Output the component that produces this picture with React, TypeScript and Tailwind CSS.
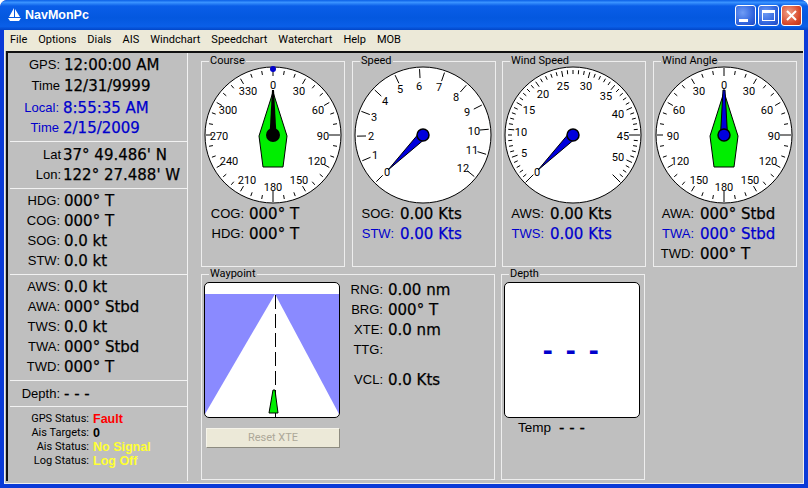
import React from "react";

const ROBOTO = "font-['Roboto',sans-serif]";
const LABEL = "font-['Liberation_Sans',Arial,sans-serif] text-[13px] leading-[20px]";
const VALUE = "font-['DejaVu_Sans',Verdana,sans-serif] text-[15px] leading-[20px] whitespace-nowrap [-webkit-text-stroke:0.25px]";

function Row({ label, value, w = 52, gap = 4, blue = false }: { label: string; value: string; w?: number; gap?: number; blue?: boolean }) {
  const color = blue ? "text-[#0000cc]" : "text-black";
  return (
    <div className={`flex h-[20px] items-center ${color}`}>
      <span className={`${LABEL} text-right whitespace-nowrap`} style={{ width: w, marginRight: gap }}>{label}</span>
      <span className={VALUE}>{value}</span>
    </div>
  );
}

function Section({ children, last = false }: { children: React.ReactNode; last?: boolean }) {
  return (
    <div className={last ? "pt-[5px]" : "pt-[2px] pb-[3px] ml-[2px] border-b border-[#f2f2f2]"}>
      <div className={last ? "" : "-ml-[2px]"}>{children}</div>
    </div>
  );
}

function StatusRow({ label, value, color }: { label: string; value: string; color: string }) {
  return (
    <div className="flex h-[14px] items-center gap-[4px]">
      <span className={`w-[81px] text-right text-[11px] text-black whitespace-nowrap ${ROBOTO}`}>{label}</span>
      <span className={`font-['Liberation_Sans',Arial,sans-serif] text-[12.5px] font-bold whitespace-nowrap ${color}`}>{value}</span>
    </div>
  );
}

function LeftPanel() {
  return (
    <div className="w-[180px] shrink-0 border-r border-[#f2f2f2] flex flex-col">
      <Section>
        <div className="flex flex-col">
          <div className="mb-px"><Row label="GPS:" value="12:00:00 AM" /></div>
          <div className="mb-[2px]"><Row label="Time" value="12/31/9999" /></div>
          <Row label="Local:" value="8:55:35 AM" w={51} blue />
          <Row label="Time" value="2/15/2009" w={51} blue />
        </div>
      </Section>
      <Section>
        <div className="pt-px">
          <Row label="Lat" value="37° 49.486' N" w={53} gap={2} />
          <Row label="Lon:" value="122° 27.488' W" w={53} gap={2} />
        </div>
      </Section>
      <Section>
        <Row label="HDG:" value="000° T" />
        <Row label="COG:" value="000° T" />
        <Row label="SOG:" value="0.0 kt" />
        <Row label="STW:" value="0.0 kt" />
      </Section>
      <Section>
        <Row label="AWS:" value="0.0 kt" />
        <Row label="AWA:" value="000° Stbd" />
        <Row label="TWS:" value="0.0 kt" />
        <Row label="TWA:" value="000° Stbd" />
        <Row label="TWD:" value="000° T" />
      </Section>
      <Section>
        <div className="pt-px -mb-px"><Row label="Depth:" value="- - -" /></div>
      </Section>
      <Section last>
        <StatusRow label="GPS Status:" value="Fault" color="text-[#ff0000]" />
        <StatusRow label="Ais Targets:" value="0" color="text-black" />
        <StatusRow label="Ais Status:" value="No Signal" color="text-[#ffff33]" />
        <StatusRow label="Log Status:" value="Log Off" color="text-[#ffff33]" />
      </Section>
    </div>
  );
}

function Frame({ title, className, children }: { title: string; className: string; children: React.ReactNode }) {
  return (
    <fieldset className={`border border-[#eeeeee] h-[211px] w-[144px] shrink-0 min-w-0 ${className}`}>
      <legend className={`ml-[7px] px-px h-[10px] leading-[10px] text-[11px] text-black whitespace-nowrap ${ROBOTO}`}>{title}</legend>
      {children}
    </fieldset>
  );
}

type Lbl = [string, number, number];

function polar(cx: number, cy: number, deg: number, r: number): [number, number] {
  const a = (deg * Math.PI) / 180;
  return [cx + r * Math.sin(a), cy - r * Math.cos(a)];
}

function Tick({ cx, cy, deg, r1, r2 }: { cx: number; cy: number; deg: number; r1: number; r2: number }) {
  const [x1, y1] = polar(cx, cy, deg, r1);
  const [x2, y2] = polar(cx, cy, deg, r2);
  return <line x1={x1} y1={y1} x2={x2} y2={y2} stroke="#000" strokeWidth={1} />;
}

function Dial({ cx, labels, children }: { cx: number; labels: Lbl[]; children: React.ReactNode }) {
  const cy = 69;
  return (
    <svg width={140} height={138} viewBox="0 0 140 138" className={`block ml-px overflow-visible text-[11px] ${ROBOTO}`}>
      <circle cx={cx} cy={cy} r={68} fill="#fff" stroke="#000" strokeWidth={1} />
      {children}
      {labels.map(([t, dx, dy], i) => (
        <text key={i} x={cx + dx} y={cy + dy + 4} textAnchor="middle" fill="#000">{t}</text>
      ))}
    </svg>
  );
}

const COURSE_LABELS: Lbl[] = [
  ["0", 0, -50], ["30", 26, -44], ["60", 45, -25], ["90", 50, 1], ["120", 44, 26], ["150", 26, 45],
  ["180", 0, 52], ["210", -26, 45], ["240", -44, 26], ["270", -54, 1], ["300", -45, -25], ["330", -25, -44],
];
const ANGLE_LABELS: Lbl[] = [
  ["0", 0, -50], ["30", 25, -44], ["30", -25, -44], ["60", 43, -25], ["60", -45, -25], ["90", 50, 1], ["90", -51, 1],
  ["120", 44, 26], ["120", -44, 26], ["150", 26, 45], ["150", -25, 45], ["180", 0, 52],
];
const SPEED_LABELS: Lbl[] = [
  ["0", -36, 37], ["1", -48, 20], ["2", -52, 1], ["3", -49, -18], ["4", -38, -34], ["5", -23, -46], ["6", -4, -49],
  ["7", 16, -48], ["8", 33, -38], ["9", 44, -23], ["10", 51, -4], ["11", 49, 15], ["12", 40, 33],
];
const WIND_LABELS: Lbl[] = [
  ["0", -36, 37], ["5", -49, 18], ["10", -52, -3], ["15", -44, -25], ["20", -30, -41], ["25", -10, -49],
  ["30", 13, -49], ["35", 33, -39], ["40", 45, -21], ["45", 50, 1], ["50", 45, 22],
];

function CompassTicks({ cx }: { cx: number }) {
  const t: React.ReactNode[] = [];
  for (let d = 0; d < 360; d += 10) {
    const inner = d === 90 || d === 180 ? 56 : d === 270 ? 61 : d === 0 ? 59 : d % 30 === 0 ? 59 : 61;
    t.push(<Tick key={d} cx={cx} cy={69} deg={d} r1={inner} r2={d % 90 === 0 ? 67 : 65} />);
  }
  return <>{t}</>;
}

function Boat({ cx }: { cx: number }) {
  const cy = 69;
  const pts = [[0, -43], [-14, 1], [-10, 32], [10, 32], [14, 1]].map(([x, y]) => `${cx + x},${cy + y}`).join(" ");
  return <polygon points={pts} fill="#00ee00" stroke="#000" strokeWidth={1} />;
}

function CourseDial({ cx }: { cx: number }) {
  const cy = 69;
  return (
    <Dial cx={cx} labels={COURSE_LABELS}>
      <CompassTicks cx={cx} />
      <Boat cx={cx} />
      <polygon points={`${cx - 1},${cy - 45} ${cx + 1},${cy - 45} ${cx + 3.5},${cy} ${cx - 3.5},${cy}`} fill="#000" />
      <circle cx={cx} cy={cy} r={7} fill="#000" />
      <circle cx={cx} cy={3} r={3} fill="#0000cc" />
    </Dial>
  );
}

function AngleDial({ cx }: { cx: number }) {
  const cy = 69;
  return (
    <Dial cx={cx} labels={ANGLE_LABELS}>
      <CompassTicks cx={cx} />
      <Boat cx={cx} />
      <polygon points={`${cx - 1},${cy - 45} ${cx + 1},${cy - 45} ${cx + 3.5},${cy} ${cx - 3.5},${cy}`} fill="#0000dd" stroke="#000" strokeWidth={1} />
      <circle cx={cx} cy={cy} r={6} fill="#0000dd" stroke="#000" strokeWidth={1.5} />
    </Dial>
  );
}

function Needle({ cx }: { cx: number }) {
  const cy = 69;
  return (
    <>
      <polygon points={`${cx + 3},${cy + 3} ${cx - 3},${cy - 3} ${cx - 35},${cy + 35}`} fill="#0000dd" stroke="#000" strokeWidth={1} />
      <circle cx={cx} cy={cy} r={6} fill="#0000dd" stroke="#000" strokeWidth={1.5} />
    </>
  );
}

function SpeedDial({ cx }: { cx: number }) {
  const t: React.ReactNode[] = [];
  for (let n = 0; n <= 12; n++) t.push(<Tick key={n} cx={cx} cy={69} deg={-135 + 22 * n} r1={57} r2={66} />);
  return (
    <Dial cx={cx} labels={SPEED_LABELS}>
      {t}
      <Needle cx={cx} />
    </Dial>
  );
}

function WindDial({ cx }: { cx: number }) {
  const t: React.ReactNode[] = [];
  for (let n = 0; n <= 54; n++) {
    const long = n === 0 || n === 45 || n === 54;
    const mid = n % 5 === 0;
    t.push(<Tick key={n} cx={cx} cy={69} deg={-135 + 5 * n} r1={long ? 56 : mid ? 59 : 61} r2={long ? 67 : 65} />);
  }
  return (
    <Dial cx={cx} labels={WIND_LABELS}>
      {t}
      <Needle cx={cx} />
    </Dial>
  );
}

function Readout({ rows, w, gap }: { rows: { label: string; value: string; blue?: boolean }[]; w: number; gap: number }) {
  return (
    <div>
      {rows.map((r) => (
        <Row key={r.label} label={r.label} value={r.value} blue={r.blue} w={w} gap={gap} />
      ))}
    </div>
  );
}

function Waypoint() {
  return (
    <div className="flex">
      <div className="ml-[2px] mt-[3px]">
        <div className="w-[136px] h-[136px] border border-black rounded-[5px] overflow-hidden bg-white">
          <svg width={134} height={134} viewBox="0 0 134 134" className="block">
            <polygon points="0,11 70,11 0,131" fill="#8a8aff" />
            <polygon points="134,11 70,11 134,131" fill="#8a8aff" />
            <line x1={70.5} y1={12} x2={70.5} y2={134} stroke="#000" strokeWidth={1} strokeDasharray="14 5" />
            <polygon points="68,107 70,107 73,130 64,130" fill="#00ee00" stroke="#000" strokeWidth={1} />
          </svg>
        </div>
        <button disabled className={`mt-[10px] ml-[2px] w-[134px] h-[20px] bg-[#ece9d8] border border-[#f6f4ea] border-r-[#8d8b80] border-b-[#8d8b80] text-[11px] text-[#aca899] ${ROBOTO}`}>
          Reset XTE
        </button>
      </div>
      <div className="mt-px">
        <Row label="RNG:" value="0.00 nm" w={43} gap={5} />
        <Row label="BRG:" value="000° T" w={43} gap={5} />
        <Row label="XTE:" value="0.0 nm" w={43} gap={5} />
        <Row label="TTG:" value="" w={43} gap={5} />
        <div className="mt-[10px]"><Row label="VCL:" value="0.0 Kts" w={43} gap={5} /></div>
      </div>
    </div>
  );
}

function Depth() {
  return (
    <div className="ml-[2px] mt-[3px]">
      <div className="w-[136px] h-[136px] border border-black rounded-[5px] bg-white flex items-center justify-center">
        <span className="font-['Liberation_Sans',Arial,sans-serif] font-bold text-[30px] leading-none tracking-[2.35px] text-[#0000cc] whitespace-nowrap">- - -</span>
      </div>
      <div className="ml-[14px] flex items-center gap-[8px] h-[20px] text-black">
        <span className="font-['Liberation_Sans',Arial,sans-serif] text-[13.5px]">Temp</span>
        <span className={VALUE}>- - -</span>
      </div>
    </div>
  );
}

function WinButton({ children, red = false }: { children: React.ReactNode; red?: boolean }) {
  return (
    <div className={`w-[21px] h-[21px] rounded-[3px] border border-white flex items-center justify-center ${red ? "bg-[radial-gradient(circle_at_35%_35%,#f0a088,#d8482a_65%,#b8341a)]" : "bg-[radial-gradient(circle_at_35%_35%,#6f9cf5,#2e62dc_65%,#2148c0)]"}`}>
      {children}
    </div>
  );
}

function TitleBar() {
  return (
    <div className="h-[30px] shrink-0 flex items-center rounded-t-[7px] pl-[8px] pr-[6px] bg-[linear-gradient(180deg,#0a5fe6_0%,#3a93ff_8%,#0a5ee8_20%,#0458df_60%,#0a5fe8_88%,#0246c8_100%)]">
      <svg width={13} height={14} viewBox="0 0 13 14" className="shrink-0">
        <path d="M6 0 L6 9 L1 9 Z M7 1 L12 9 L7 9 Z" fill="#fff" />
        <path d="M0 10 H13 L11 13 H2 Z" fill="#fff" />
      </svg>
      <span className="ml-[4px] font-['Liberation_Sans',Arial,sans-serif] font-bold text-[12.5px] text-white whitespace-nowrap">NavMonPc</span>
      <div className="ml-auto flex gap-[2px]">
        <WinButton>
          <div className="w-[9px] h-[3px] bg-white self-end mb-[3px] mr-[4px]" />
        </WinButton>
        <WinButton>
          <div className="w-[13px] h-[11px] border border-white border-t-[3px]" />
        </WinButton>
        <WinButton red>
          <svg width={11} height={11} viewBox="0 0 11 11"><path d="M1 1 L10 10 M10 1 L1 10" stroke="#fff" strokeWidth={2} /></svg>
        </WinButton>
      </div>
    </div>
  );
}

const MENU = ["File", "Options", "Dials", "AIS", "Windchart", "Speedchart", "Waterchart", "Help", "MOB"];

export default function App() {
  return (
    <div className="w-[808px] h-[488px] flex flex-col bg-[#0a3ad8] overflow-hidden rounded-t-[7px]">
      <TitleBar />
      <div className="flex-1 min-h-0 mx-[4px] mb-[4px] flex flex-col">
        <div className={`h-[21px] shrink-0 bg-[#ece9d8] flex items-center gap-[11px] pl-[6px] text-[11px] text-black ${ROBOTO}`}>
          {MENU.map((m) => <span key={m}>{m}</span>)}
        </div>
        <div className="flex-1 min-h-0 bg-[#bfbfbf] pl-[2px] pb-[2px] border-l border-b border-r border-[#f0f0f0]">
          <div className="h-full flex border-l-2 border-t-2 border-[#111111] -ml-[1px]">
            <LeftPanel />
            <div className="pl-[13px]">
              <div className="flex mt-[3px]">
                <Frame title="Course" className="">
                  <div className="ml-px"><CourseDial cx={69} /></div>
                  <Readout w={42} gap={5} rows={[{ label: "COG:", value: "000° T" }, { label: "HDG:", value: "000° T" }]} />
                </Frame>
                <Frame title="Speed" className="ml-[7px]">
                  <div className="ml-px"><SpeedDial cx={68} /></div>
                  <Readout w={41} gap={6} rows={[{ label: "SOG:", value: "0.00 Kts" }, { label: "STW:", value: "0.00 Kts", blue: true }]} />
                </Frame>
                <Frame title="Wind Speed" className="ml-[6px]">
                  <div className="ml-px"><WindDial cx={68} /></div>
                  <Readout w={41} gap={6} rows={[{ label: "AWS:", value: "0.00 Kts" }, { label: "TWS:", value: "0.00 Kts", blue: true }]} />
                </Frame>
                <Frame title="Wind Angle" className="ml-[7px]">
                  <div className="ml-px"><AngleDial cx={68} /></div>
                  <Readout w={40} gap={6} rows={[{ label: "AWA:", value: "000° Stbd" }, { label: "TWA:", value: "000° Stbd", blue: true }, { label: "TWD:", value: "000° T" }]} />
                </Frame>
              </div>
              <div className="flex mt-[2px]">
                <Frame title="Waypoint" className="w-[294px]">
                  <Waypoint />
                </Frame>
                <Frame title="Depth" className="ml-[6px]">
                  <Depth />
                </Frame>
              </div>
            </div>
          </div>
        </div>
      </div>
    </div>
  );
}
